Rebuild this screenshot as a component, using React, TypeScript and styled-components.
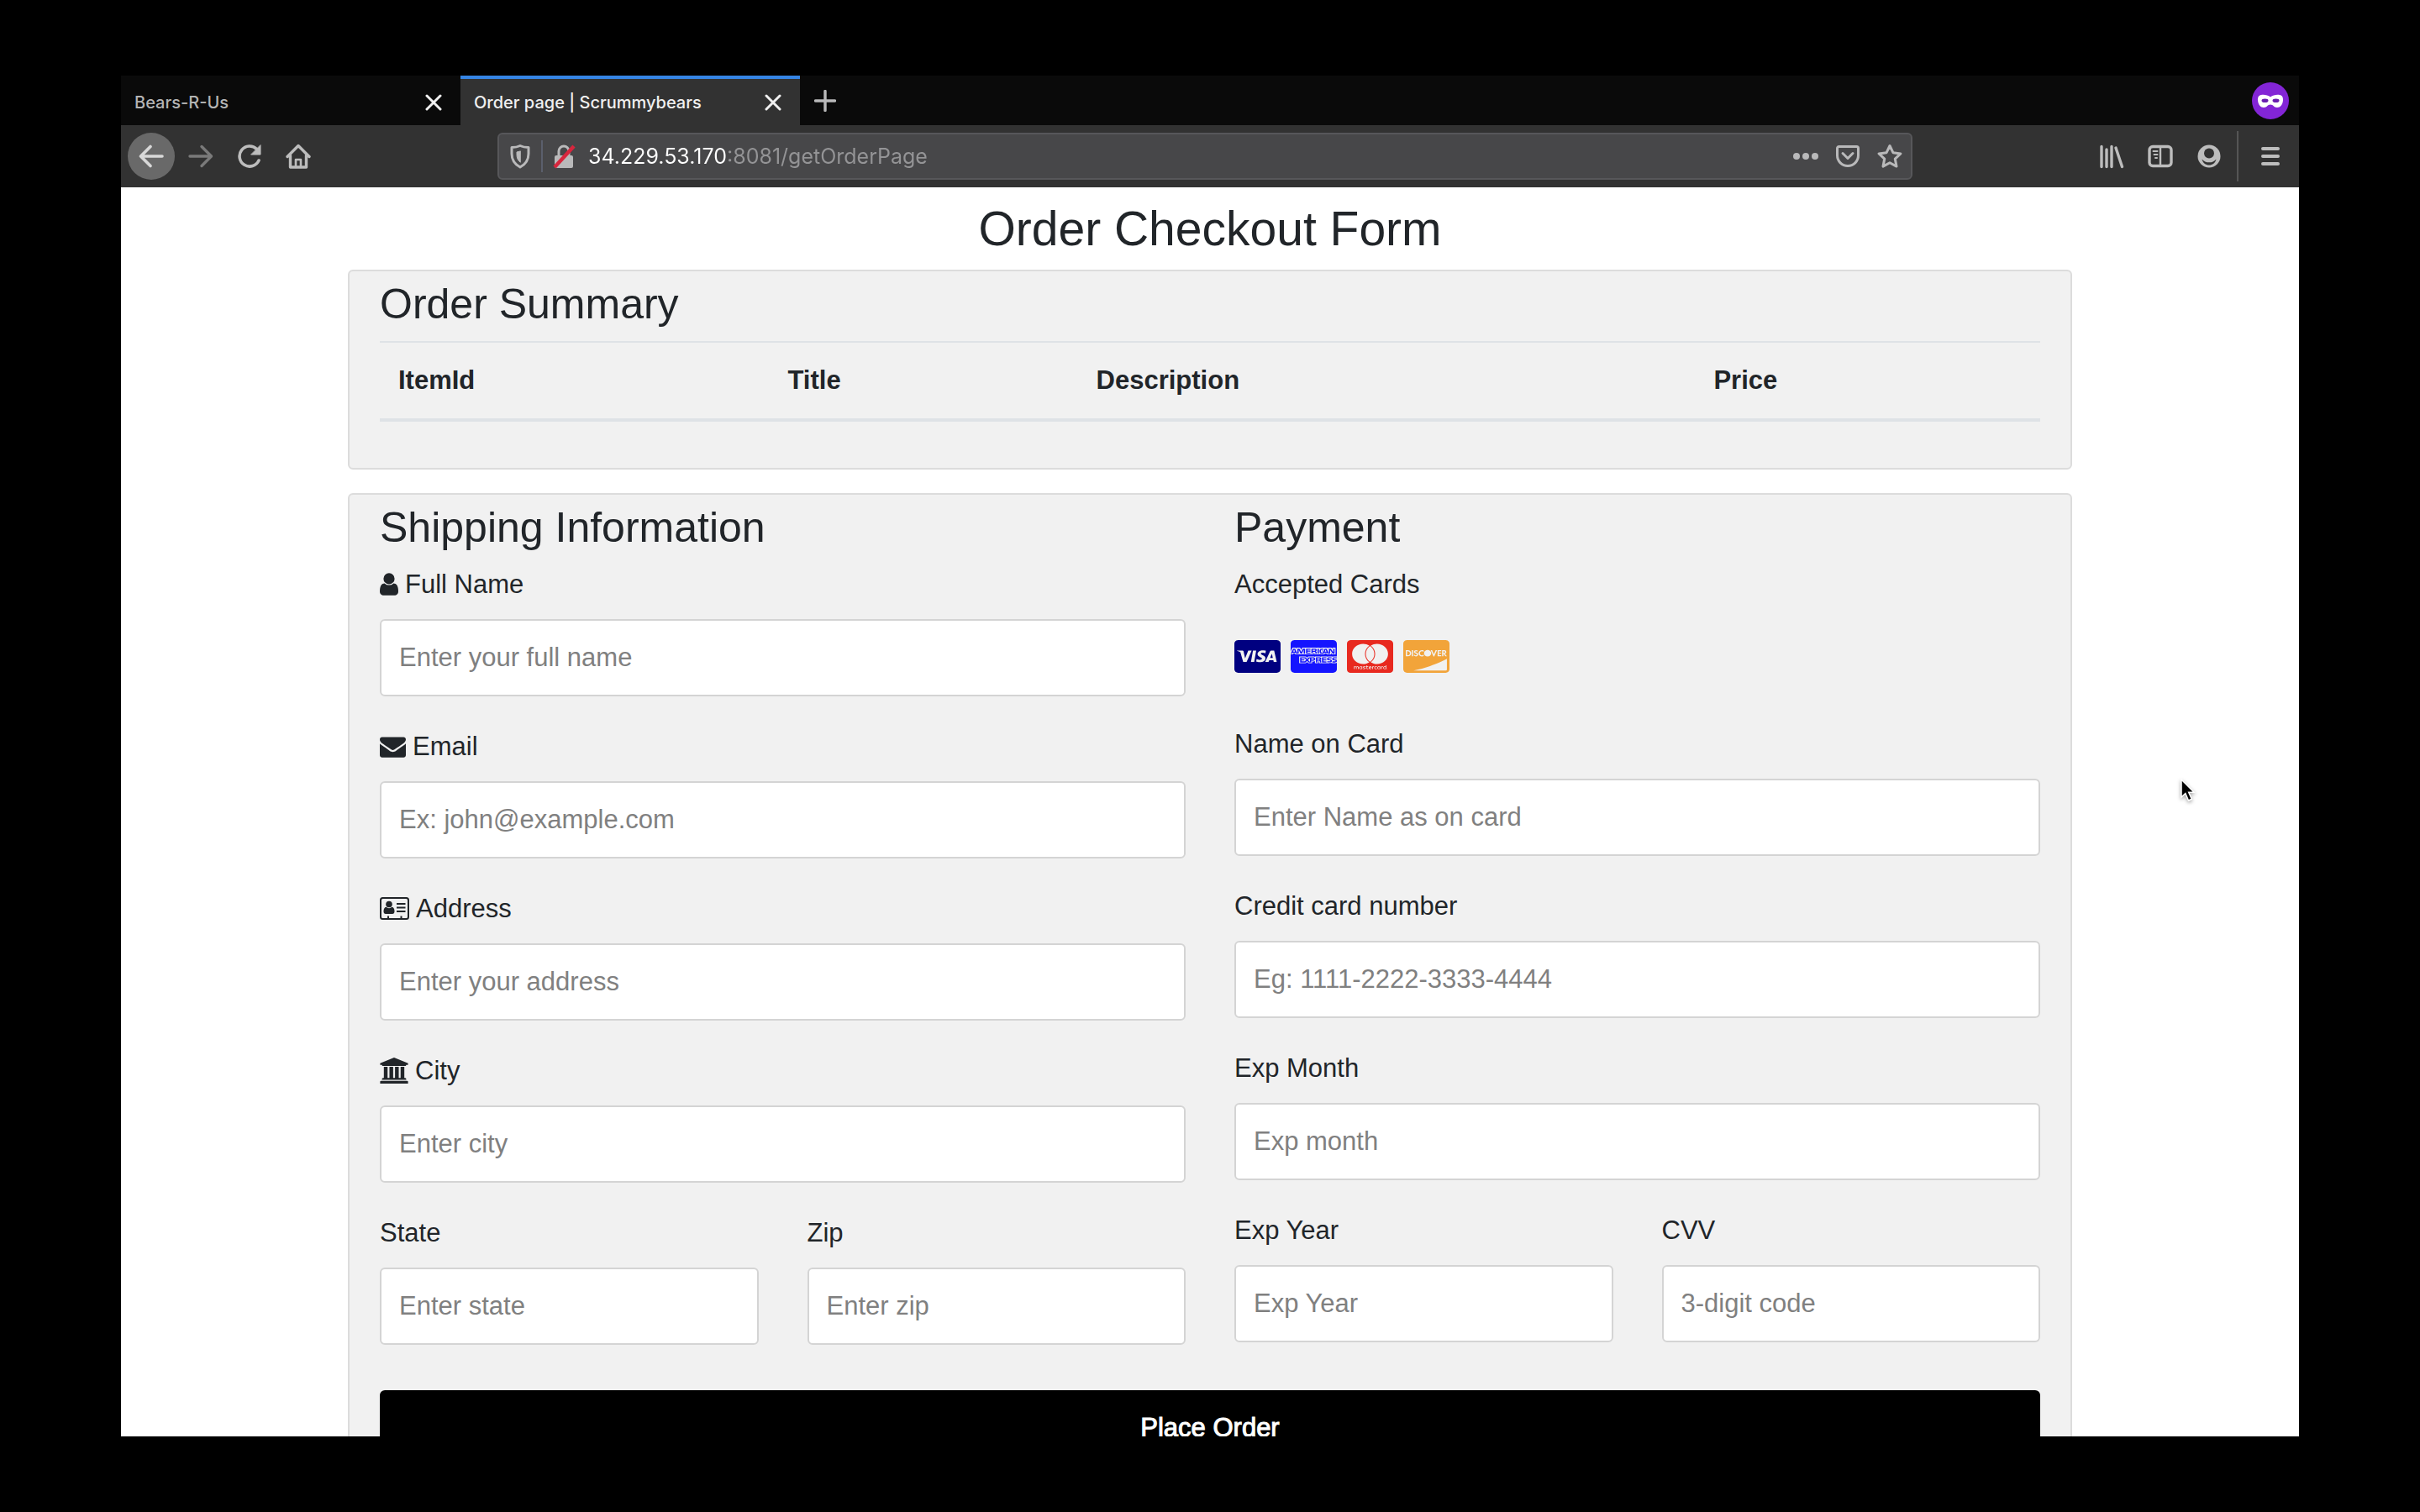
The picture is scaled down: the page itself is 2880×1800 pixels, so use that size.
import React from 'react';
import styled, { createGlobalStyle } from 'styled-components';
import { FaCcVisa, FaCcAmex, FaCcMastercard, FaCcDiscover } from 'react-icons/fa';

const GlobalStyle = createGlobalStyle`
  *, *::before, *::after { box-sizing: border-box; }
  body {
    margin: 0;
    background: #000;
    font-family: "Liberation Sans", Arial, sans-serif;
    font-size: 31px;
    line-height: 46px;
    color: #212529;
  }
  button, input { font: inherit; color: inherit; }
`;

const Desktop = styled.div`
  height: 100vh;
  padding: 5vh 5vw;
  background: #000;
`;

const BrowserWindow = styled.div`
  position: relative;
  display: flex;
  flex-direction: column;
  height: 100%;
  overflow: hidden;
  background: #fff;
`;

const PlainButton = styled.button`
  display: flex;
  align-items: center;
  justify-content: center;
  padding: 0;
  border: 0;
  background: none;
  color: #b9b9ba;
`;

/* ---------- tab strip ---------- */

const TabStrip = styled.div`
  display: flex;
  flex: none;
  height: 59px;
  background: #0a0a0a;
  font-family: Inter, "Open Sans", sans-serif;
  font-size: 20px;
  line-height: 28px;
`;

const Tab = styled.div<{ $active?: boolean }>`
  display: flex;
  align-items: center;
  flex: 0 1 404px;
  padding: 0 16px;
  border-top: 4px solid ${p => (p.$active ? '#3584e4' : 'transparent')};
  background: ${p => (p.$active ? '#323232' : 'transparent')};
`;

const TabTitle = styled.button<{ $active?: boolean }>`
  flex: 1;
  padding: 0;
  border: 0;
  background: none;
  text-align: left;
  white-space: nowrap;
  font-weight: 500;
  color: ${p => (p.$active ? '#f0f0f0' : '#b4b4b4')};
`;

const TabClose = styled(PlainButton)`
  width: 32px;
  height: 32px;
  color: #f0f0f0;
`;

const NewTab = styled(PlainButton)`
  width: 60px;
`;

const PrivateBadge = styled.div`
  display: flex;
  align-items: center;
  justify-content: center;
  width: 68px;
  margin-left: auto;
`;

/* ---------- toolbar ---------- */

const Toolbar = styled.div`
  display: flex;
  align-items: center;
  flex: none;
  height: 74px;
  padding-left: 8px;
  background: #323232;
`;

const ToolButton = styled(PlainButton)<{ $dim?: boolean; $wide?: boolean }>`
  flex: none;
  width: ${p => (p.$wide ? 68 : 58)}px;
  height: 58px;
  color: ${p => (p.$dim ? '#7a7a7a' : '#bdbdbd')};
`;

const BackButton = styled(ToolButton)`
  width: 56px;
  height: 56px;
  margin-right: 2px;
  border-radius: 50%;
  background: #696969;
  color: #d8d8d8;
`;

const Spring = styled.div`
  flex: 0 1 208px;
`;

const ToolDivider = styled.div`
  width: 2px;
  height: 60px;
  margin: 0 4px;
  background: #555;
`;

const UrlBar = styled.div`
  display: flex;
  align-items: center;
  flex: 1;
  height: 56px;
  border: 2px solid #57575a;
  border-radius: 6px;
  background: #474749;
`;

const UrlButton = styled(PlainButton)`
  flex: none;
  width: 50px;
  height: 50px;
`;

const UrlDivider = styled.div`
  width: 2px;
  height: 38px;
  background: #5b5f6c;
`;

/* The host part of the address is bright, port and path are muted. */
const UrlInput = styled.input`
  flex: 1;
  min-width: 0;
  margin-left: 4px;
  padding: 0;
  border: 0;
  outline: 0;
  font-family: Inter, "Open Sans", sans-serif;
  font-size: 25px;
  line-height: 36px;
  background: linear-gradient(to right, #fff 164px, #949496 164px);
  background-clip: text;
  -webkit-text-fill-color: transparent;
`;

/* ---------- page ---------- */

const Page = styled.main`
  flex: 1;
  min-height: 0;
  overflow: hidden;
  padding-top: 14px;
`;

const Container = styled.div`
  max-width: 2052px;
  margin: 0 auto;
`;

const PageTitle = styled.h2`
  margin: 0 0 14px;
  font-size: 57px;
  line-height: 70px;
  font-weight: 400;
  text-align: center;
`;

const Card = styled.section`
  margin-bottom: 28px;
  padding: 9px 36px 26px;
  border: 2px solid #dcdcdc;
  border-radius: 6px;
  background: #f1f1f1;
`;

const CardTitle = styled.h3`
  margin: 0 0 14px;
  font-size: 50px;
  line-height: 60px;
  font-weight: 400;
`;

const ItemTable = styled.table`
  width: 100%;
  margin-bottom: 29px;
  border-collapse: collapse;

  th {
    padding: 22px;
    border-top: 2px solid #dee2e6;
    border-bottom: 4px solid #dee2e6;
    text-align: left;
    font-weight: 700;
  }
`;

const Columns = styled.div`
  display: grid;
  grid-template-columns: repeat(2, minmax(0, 1fr));
  column-gap: 58px;
`;

const FieldBox = styled.div`
  margin-bottom: 36px;
`;

const labelStyle = `
  display: flex;
  align-items: center;
  gap: 8px;
  margin: 0 0 18px;
  line-height: 47px;
`;

const Label = styled.label`${labelStyle}`;
const Caption = styled.p`${labelStyle}`;

const TextBox = styled.input`
  display: block;
  width: 100%;
  height: 92px;
  padding: 0 21px;
  border: 2px solid #d4d4d4;
  border-radius: 6px;
  background: #fff;

  &::placeholder {
    color: #808080;
    opacity: 1;
  }
`;

const CardBrands = styled.div`
  display: flex;
  align-items: center;
  gap: 12px;
  height: 89px;
  margin-bottom: 36px;

  svg {
    width: 55px;
    height: 39px;
  }
`;

const SubmitButton = styled.button`
  display: block;
  width: 100%;
  margin: 18px 0;
  padding: 22px;
  border: 0;
  border-radius: 6px;
  background: #000;
  color: #fff;
  -webkit-text-stroke: 1px #fff;
`;

const Pointer = styled.svg`
  position: absolute;
  left: 2450px;
  top: 835px;
  filter: drop-shadow(0 2px 2px rgba(0, 0, 0, 0.35));
`;

/* ---------- icons ---------- */

type IconProps = { w?: number; h?: number; box?: string; children: React.ReactNode };

const Line = ({ w = 30, h = 30, box = '0 0 30 30', children }: IconProps) => (
  <svg width={w} height={h} viewBox={box} fill="none" stroke="currentColor" strokeWidth={3}
    strokeLinecap="round" strokeLinejoin="round" aria-hidden="true">{children}</svg>
);

const Solid = ({ w = 30, h = 30, box = '0 0 30 30', children }: IconProps) => (
  <svg width={w} height={h} viewBox={box} fill="currentColor" aria-hidden="true">{children}</svg>
);

const CrossIcon = () => (
  <Line w={20} h={20} box="0 0 20 20"><path d="M2 2l16 16M18 2L2 18" strokeWidth={3} /></Line>
);
const PlusIcon = () => (
  <Line w={26} h={26} box="0 0 26 26"><path d="M13 1.5v23M1.5 13h23" strokeWidth={3.4} /></Line>
);
const BackIcon = () => <Line><path d="M28 15H3M14 3.500L2.500 15 14 26.500" strokeWidth={3.6} /></Line>;
const ForwardIcon = () => <Line><path d="M2 15h25M16 3.500L27.500 15 16 26.500" strokeWidth={3.4} /></Line>;
const ReloadIcon = () => (
  <Line>
    <path d="M26 20A12 12 0 1 1 23.500 6.500" strokeWidth={3.6} />
    <path d="M28 2v11H17z" fill="currentColor" strokeWidth={1} />
  </Line>
);
const HomeIcon = () => (
  <Line>
    <path d="M2 15.500L15 2.500l13 13M5.500 14v14h19V14" strokeWidth={3.4} />
    <path d="M12 28v-9h6v9" strokeWidth={2.6} />
  </Line>
);
const ShieldIcon = () => (
  <Line>
    <path d="M15 2.500c3 1.500 6.500 2 10 2v7.500c0 7-3.500 12.500-10 16-6.500-3.500-10-9-10-16V4.500c3.500 0 7-.5 10-2z" />
    <path d="M15 9c-1.500.5-2.500.7-4 1v3c0 4 1.300 7 4 9z" fill="currentColor" strokeWidth={1} />
  </Line>
);
const InsecureIcon = () => (
  <Line>
    <path d="M9 15V9a6 6 0 0 1 12 0v6" />
    <rect x="4" y="14" width="22" height="15" rx="2" fill="currentColor" stroke="none" />
    <path d="M4 28L27 3" stroke="#d7263d" strokeWidth={4.4} strokeLinecap="butt" />
  </Line>
);
const DotsIcon = () => (
  <Solid><circle cx="4" cy="15" r="4" /><circle cx="15" cy="15" r="4" /><circle cx="26" cy="15" r="4" /></Solid>
);
const PocketIcon = () => (
  <Line>
    <path d="M4.500 3.500h21a2 2 0 0 1 2 2V14a12.500 12.500 0 0 1-25 0V5.500a2 2 0 0 1 2-2z" />
    <path d="M9 11.500l6 6 6-6" />
  </Line>
);
const StarIcon = () => (
  <Line><path d="M15 2.500l3.900 8.200 9 1.200-6.600 6.200 1.700 9L15 22.700l-8 4.400 1.700-9-6.600-6.200 9-1.200z" /></Line>
);
const LibraryIcon = () => (
  <Line><path d="M3 3.500v24M9 7v20.500M15 3.500v24M20 5l7.500 22.500" strokeWidth={3.400} /></Line>
);
const SidebarIcon = () => (
  <Line>
    <rect x="2" y="3.500" width="26" height="23" rx="4" strokeWidth={3.4} />
    <path d="M15 4v22" strokeWidth={2.400} />
    <path d="M6.500 9h5M7.500 13h4M9 17h2" strokeWidth={2} />
  </Line>
);
const AccountIcon = () => (
  <svg width="30" height="30" viewBox="0 0 30 30" aria-hidden="true">
    <circle cx="15" cy="15" r="13.500" fill="currentColor" />
    <circle cx="15" cy="11.500" r="6" fill="#323232" />
    <path d="M6.500 18.500c2.500 3 5 3.800 8.500 3.800s6-.8 8.500-3.800c-1 4.500-4.500 7-8.500 7s-7.500-2.500-8.500-7z" fill="#323232" />
  </svg>
);
const MenuIcon = () => <Line><path d="M6 6h18M6 15h18M6 24h18" strokeWidth={4} /></Line>;
const MaskIcon = () => (
  <svg width="44" height="44" viewBox="0 0 44 44" role="img" aria-label="Private browsing">
    <circle cx="22" cy="22" r="22" fill="#8325d6" />
    <path d="M22 17.500c3-2.300 7-3 11-2.500 3 .4 4.300 3 4 6.500-.4 5-3.500 8.500-7 8.500-4 0-4.500-3.500-8-3.500s-4 3.500-8 3.500c-3.500 0-6.600-3.500-7-8.500-.3-3.500 1-6.100 4-6.500 4-.5 8 .2 11 2.500z" fill="#fff" />
    <ellipse cx="15.500" cy="21.800" rx="4" ry="2.300" fill="#6a1fb0" />
    <ellipse cx="28.500" cy="21.800" rx="4" ry="2.300" fill="#6a1fb0" />
  </svg>
);

const UserIcon = () => (
  <Solid w={22} h={31} box="256 0 1280 1792">
    <path d="M1536 1399q0 109-62.500 187t-150.500 78h-854q-88 0-150.500-78t-62.500-187q0-85 8.500-160.500t31.500-152 58.500-131 94-89 134.500-34.500q131 128 313 128t313-128q76 0 134.500 34.500t94 89 58.500 131 31.500 152 8.500 160.500zm-256-887q0 159-112.500 271.500t-271.500 112.500-271.500-112.500-112.500-271.500 112.500-271.500 271.500-112.500 271.500 112.500 112.500 271.500z" />
  </Solid>
);
const EnvelopeIcon = () => (
  <Solid w={31} h={31} box="0 0 1792 1792">
    <path d="M1792 710v794q0 66-47 113t-113 47h-1472q-66 0-113-47t-47-113v-794q44 49 101 87 362 246 497 345 57 42 92.500 65.500t94.500 48 110 24.500h2q51 0 110-24.500t94.500-48 92.500-65.500q170-123 498-345 57-39 100-87zm0-294q0 79-49 151t-122 123q-376 261-468 325-10 7-42.500 31t-54 38.500-52 32.500-57.500 27-50 9h-2q-23 0-50-9t-57.500-27-52-32.500-54-38.500-42.500-31q-91-64-262-182.500t-205-142.500q-62-42-117-115.500t-55-136.500q0-78 41.500-130t118.500-52h1472q65 0 112.500 47t47.500 113z" />
  </Solid>
);
const AddressIcon = () => (
  <Solid w={35} h={27} box="0 0 35 27">
    <rect x="1" y="1" width="33" height="25" rx="2.500" fill="none" stroke="currentColor" strokeWidth={2} />
    <circle cx="11" cy="8.500" r="3.800" />
    <path d="M7.500 11.800c2.200 1.800 4.800 1.800 7 0 2 .3 3 2.500 3 5.200 0 1.800-1 3-2.500 3H7c-1.500 0-2.500-1.200-2.500-3 0-2.700 1-4.900 3-5.200z" />
    <path d="M20 7h10.500v2H20zM20 11.500h10.500v2H20zM20 16h10.500v2H20zM9 22.500h2V26H9zM24.500 22.500h2V26h-2z" />
  </Solid>
);
const BankIcon = () => (
  <Solid w={34} h={31} box="0 0 1920 1792">
    <path d="M960 0l960 384v128h-128q0 26-20.500 45t-48.500 19h-1526q-28 0-48.500-19t-20.500-45h-128v-128zm-704 640h256v768h128v-768h256v768h128v-768h256v768h128v-768h256v768h59q28 0 48.500 19t20.500 45v64h-1664v-64q0-26 20.500-45t48.500-19h59v-768zm1595 960q28 0 48.500 19t20.500 45v128h-1920v-128q0-26 20.500-45t48.500-19h1782z" />
  </Solid>
);

const brands = [
  { Icon: FaCcVisa, color: '#000080', title: 'Visa' },
  { Icon: FaCcAmex, color: '#1414ff', title: 'American Express' },
  { Icon: FaCcMastercard, color: '#e8291f', title: 'Mastercard' },
  { Icon: FaCcDiscover, color: '#f2a43a', title: 'Discover' },
];

/* ---------- form ---------- */

type FieldProps = { id: string; label: string; hint: string; icon?: React.ReactNode };

const Field = ({ id, label, hint, icon }: FieldProps) => (
  <FieldBox>
    <Label htmlFor={id}>{icon}{label}</Label>
    <TextBox id={id} name={id} type="text" placeholder={hint} />
  </FieldBox>
);

export default function App() {
  return (
    <>
      <GlobalStyle />
      <Desktop>
        <BrowserWindow>
          <TabStrip>
            <Tab>
              <TabTitle>Bears-R-Us</TabTitle>
              <TabClose aria-label="Close tab"><CrossIcon /></TabClose>
            </Tab>
            <Tab $active>
              <TabTitle $active>Order page | Scrummybears</TabTitle>
              <TabClose aria-label="Close tab"><CrossIcon /></TabClose>
            </Tab>
            <NewTab aria-label="New tab"><PlusIcon /></NewTab>
            <PrivateBadge><MaskIcon /></PrivateBadge>
          </TabStrip>

          <Toolbar>
            <BackButton aria-label="Back"><BackIcon /></BackButton>
            <ToolButton $dim aria-label="Forward"><ForwardIcon /></ToolButton>
            <ToolButton aria-label="Reload"><ReloadIcon /></ToolButton>
            <ToolButton aria-label="Home"><HomeIcon /></ToolButton>
            <Spring />
            <UrlBar>
              <UrlButton aria-label="Tracking protection"><ShieldIcon /></UrlButton>
              <UrlDivider />
              <UrlButton aria-label="Connection is not secure"><InsecureIcon /></UrlButton>
              <UrlInput aria-label="Address" defaultValue="34.229.53.170:8081/getOrderPage" />
              <UrlButton aria-label="Page actions"><DotsIcon /></UrlButton>
              <UrlButton aria-label="Save to Pocket"><PocketIcon /></UrlButton>
              <UrlButton aria-label="Bookmark this page"><StarIcon /></UrlButton>
            </UrlBar>
            <Spring />
            <ToolButton aria-label="Library"><LibraryIcon /></ToolButton>
            <ToolButton aria-label="Sidebars"><SidebarIcon /></ToolButton>
            <ToolButton aria-label="Account"><AccountIcon /></ToolButton>
            <ToolDivider />
            <ToolButton $wide aria-label="Menu"><MenuIcon /></ToolButton>
          </Toolbar>

          <Page>
            <Container>
              <PageTitle>Order Checkout Form</PageTitle>

              <Card>
                <CardTitle>Order Summary</CardTitle>
                <ItemTable>
                  <thead>
                    <tr>
                      <th scope="col">ItemId</th>
                      <th scope="col">Title</th>
                      <th scope="col">Description</th>
                      <th scope="col">Price</th>
                    </tr>
                  </thead>
                </ItemTable>
              </Card>

              <Card as="form">
                <Columns>
                  <div>
                    <CardTitle>Shipping Information</CardTitle>
                    <Field id="fullname" label="Full Name" hint="Enter your full name" icon={<UserIcon />} />
                    <Field id="email" label="Email" hint="Ex: john@example.com" icon={<EnvelopeIcon />} />
                    <Field id="address" label="Address" hint="Enter your address" icon={<AddressIcon />} />
                    <Field id="city" label="City" hint="Enter city" icon={<BankIcon />} />
                    <Columns>
                      <Field id="state" label="State" hint="Enter state" />
                      <Field id="zip" label="Zip" hint="Enter zip" />
                    </Columns>
                  </div>
                  <div>
                    <CardTitle>Payment</CardTitle>
                    <Caption>Accepted Cards</Caption>
                    <CardBrands>
                      {brands.map(({ Icon, color, title }) => (
                        <Icon key={title} color={color} title={title}
                          viewBox="0 32 576 448" preserveAspectRatio="none" />
                      ))}
                    </CardBrands>
                    <Field id="cardname" label="Name on Card" hint="Enter Name as on card" />
                    <Field id="cardnumber" label="Credit card number" hint="Eg: 1111-2222-3333-4444" />
                    <Field id="expmonth" label="Exp Month" hint="Exp month" />
                    <Columns>
                      <Field id="expyear" label="Exp Year" hint="Exp Year" />
                      <Field id="cvv" label="CVV" hint="3-digit code" />
                    </Columns>
                  </div>
                </Columns>
                <SubmitButton type="submit">Place Order</SubmitButton>
              </Card>
            </Container>
          </Page>

          <Pointer width="20" height="30" viewBox="0 0 20 30" aria-hidden="true">
            <path d="M2 3v21l4.800-4.500 3.700 8.500 3.800-1.700-3.600-8.100h6.500z" fill="#000" stroke="#fff" strokeWidth={1.500} />
          </Pointer>
        </BrowserWindow>
      </Desktop>
    </>
  );
}
